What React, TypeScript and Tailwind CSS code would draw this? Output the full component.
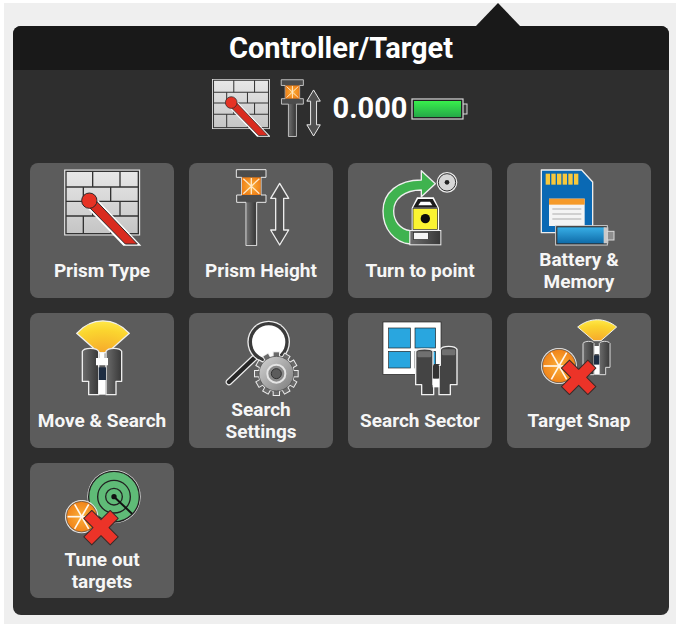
import type { ReactNode } from 'react';

// Icons are drawn in 3x coordinates: each one gets a viewBox starting at its top left corner.
function Defs() {
  return (
    <svg className="block h-0 w-0">
      <defs>
        <linearGradient id="brick" x1="0" y1="0" x2="0" y2="1">
          <stop offset="0" stopColor="#e8e8e8" />
          <stop offset="1" stopColor="#c4c4c4" />
        </linearGradient>
        <linearGradient id="steel" x1="0" y1="0" x2="1" y2="0">
          <stop offset="0" stopColor="#6c6c6c" />
          <stop offset="1" stopColor="#383838" />
        </linearGradient>
        <linearGradient id="green" x1="0" y1="0" x2="0" y2="1">
          <stop offset="0" stopColor="#38ee4c" />
          <stop offset="1" stopColor="#25a848" />
        </linearGradient>
        <linearGradient id="cell" x1="0" y1="0" x2="0" y2="1">
          <stop offset="0" stopColor="#37aee6" />
          <stop offset="1" stopColor="#0f6ba8" />
        </linearGradient>
        <radialGradient id="fan" cx="0.5" cy="1" r="1">
          <stop offset="0" stopColor="#f6a92c" />
          <stop offset="0.7" stopColor="#fbd52f" />
          <stop offset="1" stopColor="#ffe84a" />
        </radialGradient>
        <radialGradient id="orange" cx="0.5" cy="0.5" r="0.6">
          <stop offset="0" stopColor="#fbb03b" />
          <stop offset="1" stopColor="#ee7a12" />
        </radialGradient>
        <linearGradient id="gear" x1="0" y1="0" x2="1" y2="1">
          <stop offset="0" stopColor="#d4d4d4" />
          <stop offset="1" stopColor="#7c7c7c" />
        </linearGradient>
      </defs>
    </svg>
  );
}

function WallArt() {
  const rows = [
    { y: 95, xs: [218, 300] },
    { y: 138, xs: [190, 272] },
    { y: 182, xs: [218, 300] },
    { y: 234, xs: [190, 272] },
  ];
  return (
    <>
      <rect x="134" y="44" width="225" height="195" fill="url(#brick)" stroke="#e6e6e6" strokeWidth="3" />
      <rect x="138" y="48" width="217" height="187" fill="none" stroke="#333" strokeWidth="4" />
      {rows.map((r, i) => {
        const top = i === 0 ? 48 : rows[i - 1].y;
        return (
          <g key={r.y} stroke="#333" strokeWidth="4">
            {i < 3 && <line x1="138" y1={r.y} x2="355" y2={r.y} />}
            {r.xs.map((x) => (
              <line key={x} x1={x} y1={top} x2={x} y2={r.y} />
            ))}
          </g>
        );
      })}
      <path d="M226 126L364 271H310L196 152Z" fill="#fff" />
      <path d="M228 136L352 266H316L206 154Z" fill="#d92b1f" stroke="#2a2a2a" strokeWidth="3" strokeLinejoin="round" />
      <circle cx="208" cy="136" r="23" fill="#e63325" stroke="#2a2a2a" strokeWidth="3" />
    </>
  );
}

function PostArt() {
  return (
    <>
      <path
        d="M648 43H737V66H722V119H737V141H709V271H677V141H649V119H664V66H648Z"
        fill="#4c4c4c"
        stroke="#e8e8e8"
        strokeWidth="3"
        strokeLinejoin="round"
      />
      <rect x="665" y="66" width="56" height="53" fill="url(#orange)" />
      <path d="M669 70L717 115M717 70L669 115M693 68V117" stroke="#ffe7c4" strokeWidth="4" />
      <rect x="680" y="141" width="26" height="127" fill="url(#steel)" />
      <path
        d="M778 84L805 129H790V224H805L778 269L751 224H766V129H751Z"
        fill="#505050"
        stroke="#ececec"
        strokeWidth="4"
        strokeLinejoin="round"
      />
    </>
  );
}

function TurnArt() {
  return (
    <>
      <path
        d="M245 46L287 85L245 124V104C195 104 162 130 162 167C162 198 182 222 212 226V266C165 262 130 222 130 167C130 112 175 74 245 74Z"
        fill="#3fb34f"
        stroke="#efefef"
        strokeWidth="4"
        strokeLinejoin="round"
      />
      <circle cx="322" cy="81" r="29" fill="#d6d6d6" stroke="#efefef" strokeWidth="4" />
      <circle cx="322" cy="81" r="26" fill="none" stroke="#333" strokeWidth="3" />
      <circle cx="322" cy="81" r="7" fill="#222" />
      <path d="M216 158L232 126H282L298 158V226H216Z" fill="#fff" />
      <path d="M220 157L235 131H279L294 157Z" fill="#1d1d1d" />
      <path d="M236 150L243 139H271L278 150Z" fill="#fff" />
      <rect x="220" y="160" width="74" height="62" fill="#fbf431" stroke="#222" strokeWidth="2" />
      <circle cx="257" cy="190" r="14" fill="#0c0c0c" />
      <rect x="209" y="224" width="96" height="46" fill="#efefef" />
      <rect x="212" y="227" width="90" height="40" fill="url(#steel)" />
      <rect x="222" y="231" width="44" height="22" fill="#f4f4f4" stroke="#222" strokeWidth="2" />
    </>
  );
}

function MemoryArt() {
  return (
    <>
      <path d="M605 44H726L759 80V232H605Z" fill="#0a69b4" stroke="#ededed" strokeWidth="4" strokeLinejoin="round" />
      {[618, 635, 652, 669, 686, 703].map((x) => (
        <rect key={x} x={x} y="55" width="13" height="33" fill="#f7c83c" />
      ))}
      <rect x="628" y="130" width="107" height="82" fill="#f4f4f4" />
      <rect x="628" y="130" width="107" height="18" fill="#f59a2a" />
      <path d="M638 161H725M638 176H725M638 191H725" stroke="#c4c4c4" strokeWidth="4" />
      <rect x="648" y="211" width="155" height="58" fill="#2b2b2b" stroke="#d8d8d8" strokeWidth="3" />
      <rect x="653" y="216" width="145" height="48" fill="url(#cell)" />
      <rect x="792" y="216" width="14" height="48" fill="#c9c9c9" />
      <rect x="803" y="228" width="20" height="26" fill="#8e8e8e" stroke="#d8d8d8" strokeWidth="3" />
    </>
  );
}

// Binoculars seen from the front, with the sector fan above them
function MoveArt() {
  return (
    <>
      <path d="M170 84C215 34 282 34 328 84L262 142H236Z" fill="url(#fan)" stroke="#efefef" strokeWidth="4" strokeLinejoin="round" />
      <g stroke="#ededed" strokeWidth="4" strokeLinejoin="round">
        <path d="M187 138C192 126 230 126 236 138V268H206V228H187Z" fill="url(#steel)" />
        <path d="M258 138C264 126 300 126 305 138V228H288V268H258Z" fill="url(#steel)" />
      </g>
      <rect x="236" y="186" width="22" height="38" fill="#1e2d42" />
      <path d="M238 142H254V158H264V180H228V158H238Z" fill="#fff" />
      <rect x="237" y="224" width="19" height="44" fill="#fff" />
    </>
  );
}

function SearchArt() {
  const teeth = Array.from({ length: 12 }, (_, i) => i * 30);
  return (
    <>
      <path d="M705 155L626 230" stroke="#ededed" strokeWidth="20" strokeLinecap="round" />
      <path d="M705 155L626 230" stroke="#262626" strokeWidth="13" strokeLinecap="round" />
      <circle cx="745" cy="110" r="64" fill="#ededed" />
      <circle cx="745" cy="110" r="60" fill="#3a3a3a" />
      <circle cx="745" cy="110" r="50" fill="#fff" />
      <g transform="translate(768 205)">
        {teeth.map((a) => (
          <rect key={a} x="-11" y="-67" width="22" height="24" fill="#ededed" transform={`rotate(${a})`} />
        ))}
        <circle r="55" fill="#ededed" />
        {teeth.map((a) => (
          <rect key={a} x="-8" y="-64" width="16" height="22" fill="#6a6a6a" transform={`rotate(${a})`} />
        ))}
        <circle r="52" fill="url(#gear)" stroke="#444" strokeWidth="2" />
        <circle r="27" fill="#8a8a8a" stroke="#e4e4e4" strokeWidth="6" />
        <circle r="15" fill="#5c5c5c" stroke="#333" strokeWidth="3" />
      </g>
    </>
  );
}

function SectorArt() {
  return (
    <>
      <rect x="130" y="50" width="174" height="157" fill="#fff" stroke="#222" strokeWidth="2" />
      <rect x="147" y="68" width="65" height="60" fill="#29a6df" stroke="#222" strokeWidth="2" />
      <rect x="226" y="68" width="62" height="60" fill="#29a6df" stroke="#222" strokeWidth="2" />
      <rect x="147" y="138" width="65" height="50" fill="#29a6df" stroke="#222" strokeWidth="2" />
      <rect x="226" y="138" width="62" height="50" fill="#29a6df" stroke="#222" strokeWidth="2" />
      <rect x="276" y="176" width="30" height="50" fill="#333" />
      <g stroke="#f0f0f0" strokeWidth="4" strokeLinejoin="round">
        <path d="M228 138C234 128 276 128 280 138V238H282V268H246V238H228Z" fill="#444" />
        <path d="M302 132C308 120 346 120 352 132V238H332V268H298V180H302Z" fill="#444" />
      </g>
      <rect x="280" y="180" width="18" height="40" fill="#333" />
      <rect x="279" y="220" width="20" height="26" fill="#fff" />
      <rect x="233" y="138" width="42" height="18" rx="4" fill="#707070" />
      <rect x="307" y="132" width="40" height="18" rx="4" fill="#707070" />
    </>
  );
}

function Slice({ cx, cy, r }: { cx: number; cy: number; r: number }) {
  const d = r * 0.92;
  return (
    <g transform={`translate(${cx} ${cy})`}>
      <circle r={r + 4} fill="#e8e8e8" />
      <circle r={r} fill="url(#orange)" stroke="#444" strokeWidth="2" />
      <g stroke="#fff8ec" strokeWidth="5">
        <line x1={-d} y1="0" x2={d} y2="0" />
        <line x1={-d * 0.5} y1={-d * 0.87} x2={d * 0.5} y2={d * 0.87} />
        <line x1={-d * 0.5} y1={d * 0.87} x2={d * 0.5} y2={-d * 0.87} />
      </g>
    </g>
  );
}

function RedX({ cx, cy }: { cx: number; cy: number }) {
  return (
    <path
      transform={`translate(${cx} ${cy}) rotate(45)`}
      d="M-17 -56H17V-17H56V17H17V56H-17V17H-56V-17H-17Z"
      fill="#ec3328"
      stroke="#3a2a28"
      strokeWidth="3"
      strokeLinejoin="round"
    />
  );
}

function SnapArt() {
  return (
    <>
      <path d="M714 65C750 36 796 36 831 65L784 106H762Z" fill="url(#fan)" stroke="#efefef" strokeWidth="3" strokeLinejoin="round" />
      <g stroke="#dcdcdc" strokeWidth="3" strokeLinejoin="round">
        <path d="M730 114C736 106 758 106 763 114V208H745V186H730Z" fill="url(#steel)" />
        <path d="M779 114C784 106 806 106 811 114V186H798V208H779Z" fill="url(#steel)" />
      </g>
      <rect x="763" y="150" width="16" height="28" fill="#1e2d42" />
      <rect x="764" y="122" width="14" height="24" fill="#fff" />
      <rect x="764" y="178" width="14" height="30" fill="#fff" />
      <Slice cx={658} cy={182} r={50} />
      <RedX cx={717} cy={216} />
    </>
  );
}

function TuneArt() {
  return (
    <>
      <circle cx="342" cy="125" r="80" fill="#e2e2e2" />
      <circle cx="342" cy="125" r="76" fill="#5fbb77" stroke="#222" strokeWidth="4" />
      <circle cx="342" cy="125" r="49" fill="#5fbb77" stroke="#222" strokeWidth="4" />
      <circle cx="342" cy="125" r="25" fill="#5fbb77" stroke="#222" strokeWidth="4" />
      <path d="M342 125L396 176" stroke="#111" strokeWidth="6" />
      <circle cx="342" cy="125" r="8" fill="#111" />
      <Slice cx={245} cy={185} r={46} />
      <RedX cx={303} cy={218} />
    </>
  );
}

const cards: { label: ReactNode; key: string; ox: number; oy: number; art: ReactNode }[] = [
  { key: 'type', label: 'Prism Type', ox: 30, oy: 23, art: <WallArt /> },
  { key: 'height', label: 'Prism Height', ox: 506, oy: 23, art: <PostArt /> },
  { key: 'turn', label: 'Turn to point', ox: 25, oy: 23, art: <TurnArt /> },
  { key: 'memory', label: <>Battery &amp;<br />Memory</>, ox: 502, oy: 23, art: <MemoryArt /> },
  { key: 'move', label: 'Move & Search', ox: 30, oy: 23, art: <MoveArt /> },
  { key: 'settings', label: <>Search<br />Settings</>, ox: 506, oy: 23, art: <SearchArt /> },
  { key: 'sector', label: 'Search Sector', ox: 25, oy: 23, art: <SectorArt /> },
  { key: 'snap', label: 'Target Snap', ox: 502, oy: 23, art: <SnapArt /> },
  { key: 'tune', label: <>Tune out<br />targets</>, ox: 90, oy: 24, art: <TuneArt /> },
];

function Battery() {
  return (
    <svg width="57" height="22" viewBox="0 0 57 22" className="block">
      <rect x="51" y="6" width="5" height="10" fill="#3a3a3a" stroke="#d8d8d8" strokeWidth="1" />
      <rect x="1" y="1" width="51" height="20" fill="#222" stroke="#d8d8d8" strokeWidth="1.2" />
      <rect x="3" y="3" width="47" height="16" fill="url(#green)" />
    </svg>
  );
}

export default function App() {
  return (
    <div className="h-[627px] w-[688px] overflow-hidden bg-white pl-1 pt-[3px] [font-family:Roboto,sans-serif]">
      <Defs />
      <div className="relative h-[621px] w-[672px] bg-[#efefef] pl-[9px] pt-[23px]">
        {/* pointer at the top of the popover */}
        <div className="absolute left-[471px] top-0 h-0 w-0 border-x-[23px] border-b-[24px] border-x-transparent border-b-[#191919]" />
        <div className="h-[589px] w-[656px] overflow-hidden rounded-lg bg-[#2e2e2e]">
          <div className="flex h-[44px] items-center justify-center bg-[#191919] pt-[2px] text-[29px] font-bold text-white">
            Controller/Target
          </div>
          <div className="mt-[9px] flex h-[58px] items-center justify-center pr-[2px]">
            <svg width="58" height="58" viewBox="133 43 227 229" className="block">
              <WallArt />
            </svg>
            <svg width="44" height="58" viewBox="645 40 165 233" className="ml-[9px] block">
              <PostArt />
            </svg>
            <span className="ml-[10px] text-[29px] font-bold leading-none text-white">0.000</span>
            <span className="ml-1 mt-[2px]">
              <Battery />
            </span>
          </div>
          <div className="mt-[26px] grid grid-cols-[repeat(4,144px)] gap-x-[15px] gap-y-[15px] px-[17px]">
            {cards.map((c) => (
              <div key={c.key} className="flex h-[135px] flex-col rounded-lg bg-[#5c5c5c]">
                <svg
                  width="144"
                  height="83"
                  viewBox={`${c.ox} ${c.oy} 432 249`}
                  className="block shrink-0"
                >
                  {c.art}
                </svg>
                <div className="flex h-[50px] items-center justify-center text-center text-[19px] font-bold leading-[22px] text-[#f6f6f6]">
                  <span>{c.label}</span>
                </div>
              </div>
            ))}
          </div>
        </div>
      </div>
    </div>
  );
}
